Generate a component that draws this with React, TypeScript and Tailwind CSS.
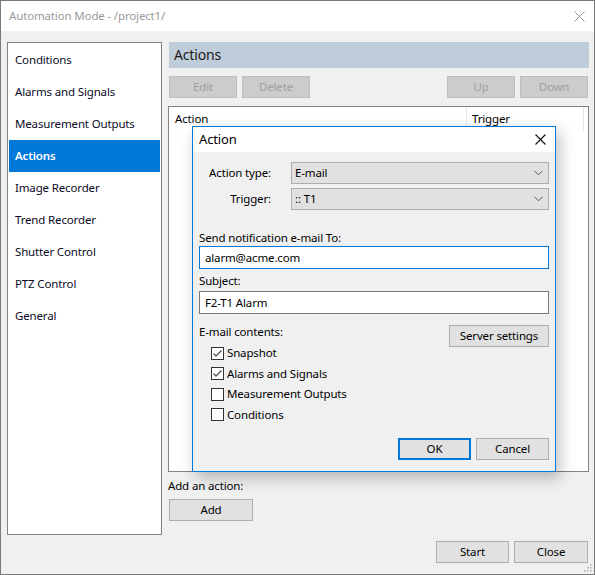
import React from "react";

const navItems = [
  "Conditions",
  "Alarms and Signals",
  "Measurement Outputs",
  "Actions",
  "Image Recorder",
  "Trend Recorder",
  "Shutter Control",
  "PTZ Control",
  "General",
];

function Btn({ label, disabled, className = "" }: { label: string; disabled?: boolean; className?: string }) {
  return (
    <div
      className={`flex h-[22px] items-center justify-center border ${
        disabled ? "border-[#bfbfbf] bg-[#cccccc] text-[#a0a0a0]" : "border-[#adadad] bg-[#e1e1e1] text-black"
      } ${className}`}
    >
      {label}
    </div>
  );
}

function Chevron() {
  return (
    <svg width="9" height="6" viewBox="0 0 9 6" className="text-[#555]">
      <path d="M0.5 0.8 L4.5 4.8 L8.5 0.8" fill="none" stroke="currentColor" strokeWidth="1" />
    </svg>
  );
}

function Combo({ label, value }: { label: string; value: string }) {
  return (
    <div className="flex items-center">
      <div className="w-[72px] text-right">{label}</div>
      <div className="ml-[20px] flex h-[22px] flex-1 items-center justify-between border border-[#adadad] bg-[#e1e1e1] pl-[3px] pr-[5px]">
        <span>{value}</span>
        <Chevron />
      </div>
    </div>
  );
}

function Check({ label, checked }: { label: string; checked?: boolean }) {
  return (
    <div className="flex h-[20.5px] items-center">
      <div className="flex h-[13px] w-[13px] items-center justify-center border border-[#333] bg-white">
        {checked && (
          <svg width="11" height="11" viewBox="0 0 11 11">
            <path d="M1.5 5.5 L4 8 L9.5 2.5" fill="none" stroke="#555" strokeWidth="1.3" />
          </svg>
        )}
      </div>
      <span className="ml-[3px]">{label}</span>
    </div>
  );
}

export default function App() {
  return (
    <div className="relative flex h-[575px] w-[595px] flex-col border border-[#7a7a7a] bg-[#f0f0f0] font-['Noto_Sans','Liberation_Sans',sans-serif] text-[11.5px] leading-[12px] tracking-[-0.15px] text-black">
      {/* title bar */}
      <div className="flex h-[30px] shrink-0 items-center justify-between bg-white pl-[8px] pr-[9px]">
        <span className="text-[#999999]">Automation Mode - /project1/</span>
        <svg width="11" height="11" viewBox="0 0 11 11">
          <path d="M0.5 0.5 L10.5 10.5 M10.5 0.5 L0.5 10.5" stroke="#999" strokeWidth="1" />
        </svg>
      </div>

      <div className="box-content flex h-[493px] gap-[6px] pl-[6px] pr-[5px] pt-[11px]">
        {/* left nav */}
        <div className="h-[493px] w-[155px] shrink-0 border border-[#828282] bg-white pl-[1px] pr-[1px] pt-[1px]">
          {navItems.map((item) => (
            <div
              key={item}
              className={`flex h-[32px] items-center pl-[6px] ${
                item === "Actions" ? "bg-[#0078d7] font-semibold text-white" : "text-[#0b0b1f]"
              }`}
            >
              {item}
            </div>
          ))}
        </div>

        {/* right column */}
        <div className="flex w-[421px] flex-col">
          <div className="ml-[1px] flex h-[26px] items-center bg-[#bfcddb] pl-[5px] text-[14px] leading-[16px] text-[#1a1a1a]">
            Actions
          </div>
          <div className="mt-[8px] flex gap-[5px] pl-[1px] pr-[1px]">
            <Btn label="Edit" disabled className="w-[68px]" />
            <Btn label="Delete" disabled className="w-[68px]" />
            <div className="flex-1" />
            <Btn label="Up" disabled className="w-[68px]" />
            <Btn label="Down" disabled className="w-[68px]" />
          </div>
          <div className="mt-[8px] flex h-[366px] flex-col border border-[#828282] bg-white">
            <div className="flex h-[24px]">
              <div className="flex w-[298px] items-center border-r border-[#e5e5e5] pl-[6px]">Action</div>
              <div className="flex w-[117px] items-center border-r border-[#e5e5e5] pl-[5px]">Trigger</div>
            </div>
          </div>
          <div className="mt-[8px]">Add an action:</div>
          <Btn label="Add" className="ml-[1px] mt-[7px] w-[84px]" />
        </div>
      </div>

      {/* footer */}
      <div className="mt-[6px] flex justify-end gap-[5px] pr-[6px]">
        <Btn label="Start" className="w-[73px]" />
        <Btn label="Close" className="w-[74px]" />
      </div>
      <svg width="9" height="9" viewBox="0 0 9 9" className="absolute bottom-[2px] right-[2px]">
        {[
          [7, 1],
          [4, 4],
          [7, 4],
          [1, 7],
          [4, 7],
          [7, 7],
        ].map(([x, y]) => (
          <rect key={`${x}-${y}`} x={x} y={y} width="1.5" height="1.5" fill="#b0b0b0" />
        ))}
      </svg>

      {/* Action dialog */}
      <div className="absolute left-[191px] top-[125px] flex h-[346px] w-[364px] flex-col border border-[#0078d7] bg-[#f0f0f0] shadow-[4px_6px_14px_rgba(0,0,0,0.25)]">
        <div className="flex h-[25px] shrink-0 items-center justify-between bg-white pl-[6px] pr-[9px]">
          <span className="pb-[2px] text-[13px] leading-[14px]">Action</span>
          <svg width="11" height="11" viewBox="0 0 11 11">
            <path d="M0.5 0.5 L10.5 10.5 M10.5 0.5 L0.5 10.5" stroke="#111" strokeWidth="1.1" />
          </svg>
        </div>
        <div className="flex flex-1 flex-col pl-[6px] pr-[6px]">
          <div className="mt-[10px] flex flex-col gap-[4px]">
            <Combo label="Action type:" value="E-mail" />
            <Combo label="Trigger:" value=":: T1" />
          </div>
          <div className="mt-[22px]">Send notification e-mail To:</div>
          <div className="mt-[2px] flex h-[23px] items-center border border-[#0078d7] bg-white pl-[5px]">alarm@acme.com</div>
          <div className="mt-[6px]">Subject:</div>
          <div className="mt-[4px] flex h-[23px] items-center border border-[#7a7a7a] bg-white pl-[5px]">F2-T1 Alarm</div>
          <div className="mt-[12px] flex items-start justify-between">
            <div className="flex flex-col">
              <div>E-mail contents:</div>
              <div className="ml-[12px] mt-[5px] flex flex-col">
                <Check label="Snapshot" checked />
                <Check label="Alarms and Signals" checked />
                <Check label="Measurement Outputs" />
                <Check label="Conditions" />
              </div>
            </div>
            <Btn label="Server settings" className="-mt-[1px] h-[21px] w-[100px]" />
          </div>
          <div className="mb-[11px] mt-auto flex justify-end gap-[5px]">
            <div className="flex h-[22px] w-[73px] items-center justify-center border-2 border-[#0078d7] bg-[#e1e1e1]">OK</div>
            <Btn label="Cancel" className="w-[73px]" />
          </div>
        </div>
      </div>
    </div>
  );
}
